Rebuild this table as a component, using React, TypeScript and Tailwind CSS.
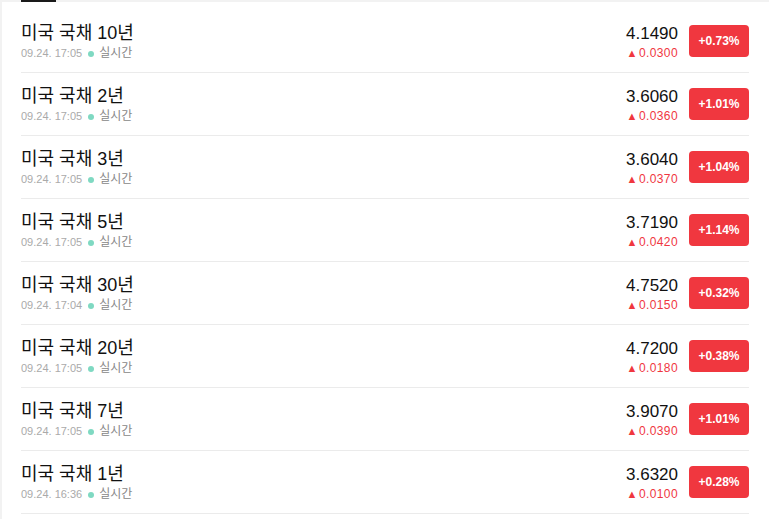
const rows = [
  { name: "미국 국채 10년", time: "09.24. 17:05", price: "4.1490", diff: "0.0300", rate: "+0.73%" },
  { name: "미국 국채 2년", time: "09.24. 17:05", price: "3.6060", diff: "0.0360", rate: "+1.01%" },
  { name: "미국 국채 3년", time: "09.24. 17:05", price: "3.6040", diff: "0.0370", rate: "+1.04%" },
  { name: "미국 국채 5년", time: "09.24. 17:05", price: "3.7190", diff: "0.0420", rate: "+1.14%" },
  { name: "미국 국채 30년", time: "09.24. 17:04", price: "4.7520", diff: "0.0150", rate: "+0.32%" },
  { name: "미국 국채 20년", time: "09.24. 17:05", price: "4.7200", diff: "0.0180", rate: "+0.38%" },
  { name: "미국 국채 7년", time: "09.24. 17:05", price: "3.9070", diff: "0.0390", rate: "+1.01%" },
  { name: "미국 국채 1년", time: "09.24. 16:36", price: "3.6320", diff: "0.0100", rate: "+0.28%" },
];

export default function App() {
  return (
    <div
      className="h-[519px] w-[769px] overflow-hidden border-l-2 border-[#f2f2f2] bg-white"
      style={{ fontFamily: '"Liberation Sans", "Noto Sans CJK KR", sans-serif' }}
    >
      <div className="flex h-[2px] bg-[#f2f2f2]">
        <div className="ml-[19px] w-[35px] bg-[#1a1a1a]" />
      </div>
      <ul className="pt-[8px] pl-[19px] pr-[20px]">
        {rows.map((r) => (
          <li key={r.name} className="flex h-[63px] items-center border-b border-[#ebebeb]">
            <div className="flex-1">
              <p className="text-[18px] leading-[24px] text-[#111]">{r.name}</p>
              <p className="mt-[1px] flex items-center text-[11px] leading-[15px] text-[#aaa]">
                {r.time}
                <span className="ml-[6px] mr-[5px] h-[6px] w-[6px] rounded-full bg-[#7fd9c2]" />
                <span className="text-[12px] text-[#888]">실시간</span>
              </p>
            </div>
            <div className="text-right">
              <p className="text-[17px] leading-[24px] text-[#111]">{r.price}</p>
              <p className="flex items-center justify-end text-[12px] leading-[15px] tracking-[0.4px] text-[#f0373f]">
                <span className="mr-[1px] text-[11px]">▲</span>
                {r.diff}
              </p>
            </div>
            <div className="ml-[11px] flex h-[32px] w-[60px] items-center justify-center rounded-[4px] bg-[#f0373f] text-[12px] font-bold text-white">
              {r.rate}
            </div>
          </li>
        ))}
      </ul>
    </div>
  );
}
